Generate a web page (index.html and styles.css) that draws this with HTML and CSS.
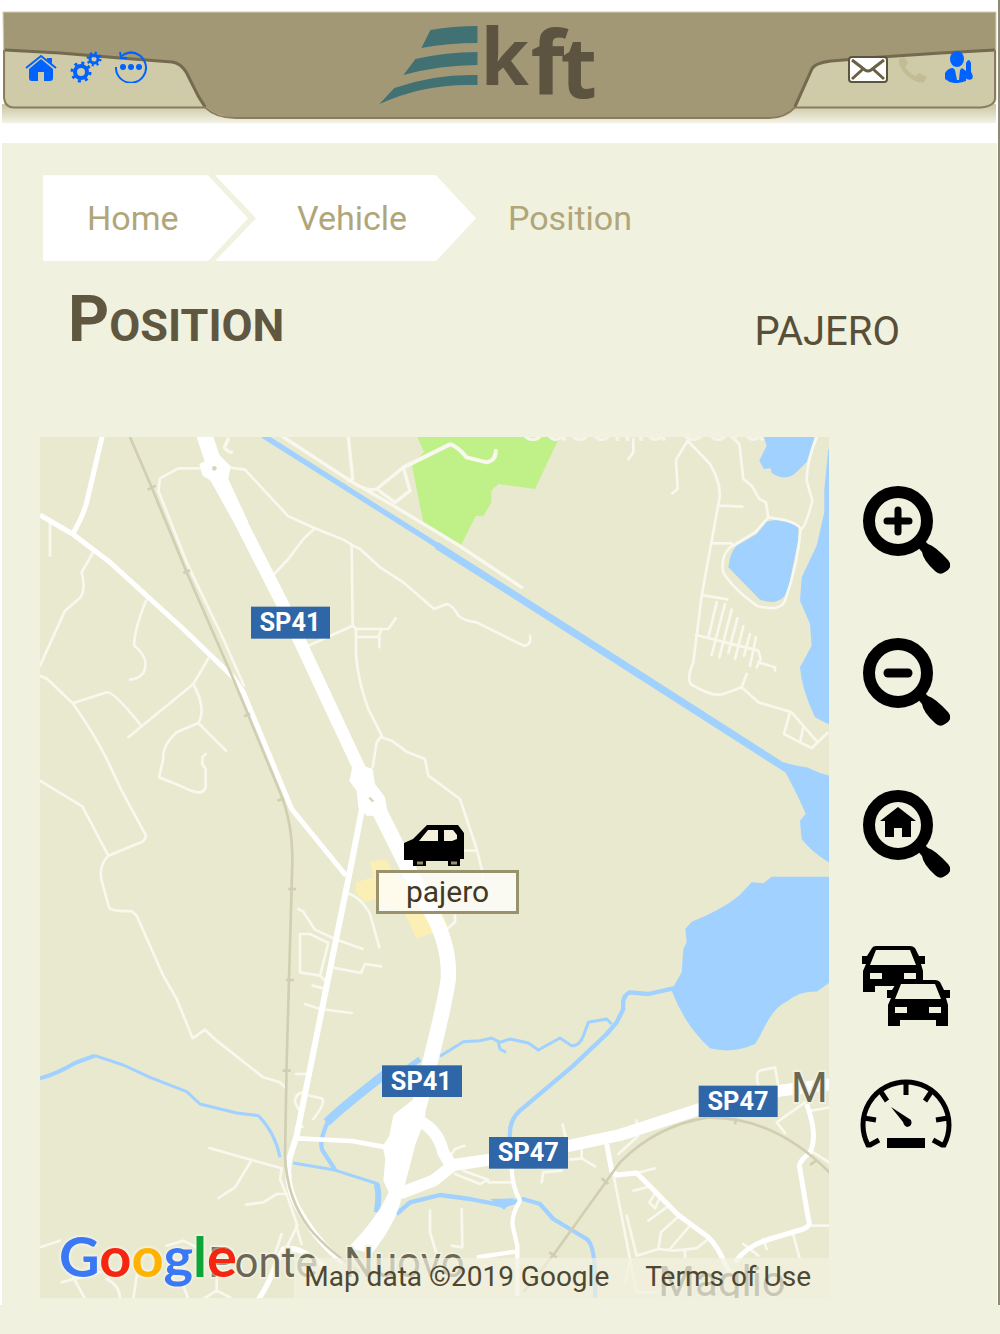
FILE: index.html
```
<!DOCTYPE html>
<html lang="en">
<head>
    <meta charset="UTF-8">
    <meta name="viewport" content="width=device-width, initial-scale=1.0">
    <title>kft - Position</title>
    <link rel="stylesheet" href="styles.css">
</head>
<body>
    <div class="page">
        <header class="header">
            <svg class="header-bg" viewBox="0 0 997 143" role="img" aria-label="kft">
                <defs>
                    <linearGradient id="shade" x1="0" y1="0" x2="0" y2="1">
                        <stop offset="0" stop-color="#c9c4a0"/>
                        <stop offset="1" stop-color="#f3f3e6"/>
                    </linearGradient>
                </defs>
                <rect x="2" y="104" width="993" height="19" fill="url(#shade)"/>
                <path d="M3 12H995V98Q995 106 983 107H794Q786 118 768 118H236Q216 117 205 107H14Q4 106 4 98Z" fill="#a29876" stroke="#d4d0b0"/>
                <path d="M5 50L60 53L120 58L172 62Q180 63 186 72L198 96L204 107H14Q5 106 5 99Z" fill="#cfcaa7"/>
                <path d="M994 50L940 53L880 57L830 61Q814 63 811 69L795 107H982Q994 105 994 98Z" fill="#cfcaa7"/>
                <path d="M5 50L60 53L120 58L172 62Q180 63 186 72L198 96L205 107M994 50L940 53L880 57L830 61Q814 63 811 69L794 107" fill="none" stroke="#736a50" stroke-width="3"/>
                <path d="M4 50V98Q5 107 14 107.500H205Q216 118 236 118H768Q784 118 794 107.500H980Q994 106 994 98V50" fill="none" stroke="#8c7c5e" stroke-width="2"/>
                <g fill="#427174">
                    <path d="M430 30Q453 26 477 26V43Q448 43 421 48Z"/>
                    <path d="M415 59Q446 52 477 52V65Q440 65 403 75Z"/>
                    <path d="M394 88Q433 74 477 75V85Q424 83 379 104Z"/>
                </g>
                <text class="logo-text" y="85"><tspan x="480" font-size="78">k</tspan><tspan x="530" y="94" font-size="88">f</tspan><tspan x="560" y="98" font-size="84">t</tspan></text>
            </svg>
            <nav class="top-nav" aria-label="Main">
                <a href="#" aria-label="Home">
                    <svg width="32" height="32" viewBox="0 0 32 32"><path d="M1 17L16 5L31 17" fill="none" stroke="#0062ff" stroke-width="2"/><path d="M4 18L16 8L28 18V27Q28 30 25 30H19V21H13V30H7Q4 30 4 27ZM22 7H27V13L22 9Z" fill="#0062ff"/></svg>
                </a>
                <a href="#" aria-label="Settings">
                    <svg width="32" height="32" viewBox="0 0 32 32" fill="none" stroke="#0062ff"><circle cx="11" cy="21" r="6" stroke-width="4"/><circle cx="11" cy="21" r="9" stroke-width="3" stroke-dasharray="3 4.070"/><circle cx="24" cy="8" r="4" stroke-width="3"/><circle cx="24" cy="8" r="6" stroke-width="3" stroke-dasharray="2 2.710"/></svg>
                </a>
                <a href="#" aria-label="History">
                    <svg width="32" height="32" viewBox="0 0 32 32" fill="none" stroke="#0062ff" stroke-width="2"><path d="M1 16A15 15 0 1 0 10 3Q17 -1 24 4M5 1L6 7L12 7M7 5L11 2"/><g fill="#0062ff" stroke="none"><circle cx="8" cy="16" r="3"/><circle cx="16" cy="16" r="3"/><circle cx="24" cy="16" r="3"/></g></svg>
                </a>
            </nav>
            <nav class="top-nav top-nav-right" aria-label="Contact">
                <a href="#" aria-label="Messages">
                    <svg width="42" height="32" viewBox="0 0 42 32"><rect x="2" y="6" width="38" height="25" rx="3" fill="#fff" stroke="#5d543c" stroke-width="2"/><path d="M5 9L18 19Q21 21 24 19L37 9M5 28L16 18M37 28L26 18" fill="none" stroke="#6a6144" stroke-width="3"/></svg>
                </a>
                <a href="#" aria-label="Call">
                    <svg width="36" height="32" viewBox="0 0 36 32"><path d="M2 8L7 6L11 12L8 16Q12 22 18 25L22 22L30 26L27 31Q22 33 13 27Q1 18 2 8Z" fill="#c3bb93"/></svg>
                </a>
                <a href="#" aria-label="Account">
                    <svg width="32" height="32" viewBox="0 0 32 32"><ellipse cx="16" cy="8" rx="7" ry="8" fill="#0062ff"/><path d="M4 22Q7 17 12 17L15 20H18L21 17L25 20V30Q12 35 4 28Z" fill="#0062ff"/><path d="M14 19H19L18 29H16Z" fill="#cfcaa7"/><path d="M25 12Q28 6 30 12V21Q33 25 31 28Q28 30 24 27Q23 24 25 22Z" fill="#0062ff"/></svg>
                </a>
            </nav>
        </header>

        <main class="content">
            <nav class="breadcrumb" aria-label="Breadcrumb">
                <a class="crumb crumb-first" href="#">Home</a>
                <a class="crumb crumb-next" href="#">Vehicle</a>
                <span class="crumb-current">Position</span>
            </nav>

            <div class="title-row">
                <h1>Position</h1>
                <p class="vehicle-name">PAJERO</p>
            </div>

            <div class="map-row">
                <div class="map">
                    <svg class="map-canvas" viewBox="0 24 2367 2583" preserveAspectRatio="xMidYMid slice" role="img" aria-label="Map">
                        <!-- green and built-up areas -->
                        <path d="M1122 0L1152 70L1115 105L1150 280L1262 350L1308 260L1330 262L1354 220V185L1375 165L1485 180L1570 0Z" fill="#bff188"/>
                        <path d="M990 1298L1040 1290L1060 1340L1180 1400L1225 1490L1205 1510L1165 1515L1130 1530L1095 1455L1000 1410L975 1420L948 1390V1360L1000 1345Z" fill="#fbefb5"/>

                        <!-- lakes -->
                        <g fill="#a0d1ff">
                            <path transform="translate(1170 0)" d="M1000 20L1010 50L988 95L1002 120L1022 118L1025 132Q1060 155 1090 138L1130 100L1155 20ZM1195 60L1183 180V250L1160 350L1115 445L1110 515L1140 585L1145 650L1110 715Q1115 780 1155 865L1200 888V60ZM1010 278Q1060 262 1105 295V330L1075 480Q1055 535 990 512L895 415Q900 370 920 350L980 315ZM1060 1000L1100 1010L1130 1015L1170 1032L1200 1040V1302Q1145 1270 1115 1230L1110 1175L1127 1155Q1110 1110 1062 1022Z"/>
                            <path transform="translate(1170 1290)" d="M1200 53H1025L1000 73L965 70L930 107Q880 150 785 188L766 210L770 250L760 270L755 340L732 380L725 395Q765 500 840 568Q910 585 975 555C1000 520 1020 450 1070 428Q1110 395 1160 398L1200 370Z"/>
                        </g>

                        <!-- canals and rivers -->
                        <g class="river">
                            <path d="M670 20L1200 355" stroke-width="16"/>
                            <path d="M1190 349L1600 610L2240 1020" stroke-width="22"/>
                            <g transform="translate(0 1290)">
                                <path d="M0 658Q50 645 105 612L165 590" stroke-width="12"/>
                                <path d="M165 590L250 618L330 655L440 698L480 735L590 762L655 770Q705 820 720 895" stroke-width="9"/>
                                <path d="M760 912L880 932L1015 975" stroke-width="9"/>
                                <path d="M1140 600L1070 650" stroke-width="16"/>
                                <path d="M1035 645Q900 750 860 790" stroke-width="26"/>
                                <path d="M865 785Q835 850 848 875L885 932" stroke-width="13"/>
                                <path d="M1010 975Q1020 1010 1010 1060" stroke-width="18"/>
                                <path d="M1070 1065L1110 1030L1200 1008L1290 1020L1390 1040L1450 1020L1500 1035L1540 1080L1640 1140Q1670 1160 1665 1320" stroke-width="13"/>
                            </g>
                            <g transform="translate(1170 1290)">
                                <path d="M30 592L100 548L150 545L185 537L210 550L240 540L295 552L325 573L390 537L425 560Q450 560 460 530L475 490L530 480L545 495M205 550L210 570L228 580" stroke-width="9"/>
                                <path d="M730 388L655 405L600 400Q575 410 580 450L560 490L530 525L430 620L270 755Q235 785 240 840" stroke-width="13"/>
                                <path d="M180 1020L255 1018L222 1052Z" fill="#a0d1ff" stroke="none"/>
                            </g>
                        </g>

                        <!-- small streets -->
                        <g class="street">
                            <path d="M480 118H415L360 148L355 185L440 400L550 630L612 770M565 115L615 122L745 262L825 298L910 332L940 350L960 360L1020 415L1090 460L1182 540L1220 525Q1240 530 1255 560Q1270 575 1310 580L1450 650Q1475 650 1470 620M825 298L790 330L745 390L700 438M935 350L938 590L805 650M938 590L948 600H1045L1067 568M948 624H1015L1025 600M1018 624V655M948 600V680Q955 760 985 840L1025 920L1010 940L998 1015M1025 925L1055 935L1100 968L1155 990L1165 1040L1260 1110L1310 1260L1330 1340M1270 1265H1310"/>
                            <path d="M30 285V380M158 372L125 430Q138 480 122 505L75 545L0 710M318 515Q280 610 283 650Q320 680 316 710Q315 745 270 752M505 688L460 765L305 892L265 925M460 765Q500 840 475 882L410 910Q365 950 370 990L357 1045L420 1070Q495 1110 497 1070V1020L487 1005V985L497 975M475 882L558 965M0 740L22 750L98 823L200 790Q220 785 305 892M98 823Q160 910 200 990L245 1085L318 1220Q315 1240 290 1245L205 1280L127 1132L0 1055M205 1280Q175 1310 185 1355L208 1438Q220 1448 275 1446L290 1460L370 1640L410 1710L458 1828L495 1802L530 1835L670 1945L720 1960L735 1975"/>
                            <path d="M565 30L553 55Q560 68 575 70M925 24L938 150L925 155M730 24L930 155Q980 190 1010 180L1090 115L1110 185L1065 220L1010 180M930 155L1060 230L1250 345L1445 475" stroke-width="10"/>
                            <path d="M1090 115L1230 46Q1250 50 1280 85L1340 100Q1368 95 1367 65" stroke-width="12"/>
                            <g transform="translate(1170 0)">
                                <path d="M610 30V70L595 90M773 35L738 92L743 180L727 193M773 35L840 105Q875 165 868 210L815 500L790 700Q765 760 790 770Q850 805 880 795L935 775L950 735M935 775L985 820L1085 850L1163 940L1192 912M1080 850L1062 915L1110 940L1145 957L1163 940M1120 895L1110 940M868 230L937 233M845 343H905M815 498L892 511M798 618L985 665L992 690L980 715M985 700L1035 715V725M860 520L835 625M885 525L845 678M905 542L868 685M922 568L895 672M940 592L915 690M960 615L942 680M978 625L960 710M905 24L928 45L940 150L965 170L988 210L1008 220L1015 265L975 310L900 355Q870 385 880 430Q905 475 980 530Q1050 550 1065 515Q1105 400 1112 300Q1100 275 1015 265M1112 300Q1125 300 1147 215L1130 155Q1130 100 1160 24"/>
                            </g>
                            <g transform="translate(0 1290)">
                                <path d="M775 150L790 158L825 212L885 240L968 270M780 225H810L865 252L840 350L780 340ZM840 350L855 365M875 325L963 342L975 315L1023 322M920 103Q960 110 990 165L1018 265M818 380L850 388M795 435L840 450L935 462M768 645H800M795 700Q765 700 765 730L775 750M800 708L845 718Q860 730 820 780M770 803H788M508 867L635 903L725 928L720 960L745 1020L772 1100L740 1165M635 903L585 985L535 1017M742 1005H710L670 1030L618 1037M768 1100L785 1155M725 1125L700 1200M0 1165L60 1145M100 1255L135 1320M65 1270L180 1240M200 1260Q240 1280 240 1320M290 1250L280 1320M430 1280L445 1320M530 1260V1295L490 1320M530 1295L570 1315M380 1160L430 1145L480 1170M1170 1055V1120L1210 1250"/>
                            </g>
                            <g transform="translate(1170 1290)">
                                <path d="M75 170V190L45 215M55 900L75 870L103 860M75 945L150 975L175 962L100 935M175 970H245M398 797L410 845M420 902L455 898L495 922M455 870V898M335 970L340 940L395 935M620 785L625 830L565 885M675 928L610 945M550 945L600 1200L585 1275M590 1070L620 1190L685 1170L730 1175L800 1168L835 1140M685 1170L693 1120L748 1070M720 1170L780 1100M655 1085L710 1045M610 995L650 985M675 1005L658 1030L675 1048L692 1010M765 1175V1195M940 1155L985 1190M1000 1140L1010 1170M1088 1120L1108 1195M1135 1100H1200M1150 880L1200 912M985 680Q975 640 990 635L1035 625L1045 680M1125 730L1040 790L1065 822M1145 755L1200 745M95 1050L97 1165L65 1160M600 1200L620 1300H680"/>
                            </g>
                        </g>

                        <!-- roads -->
                        <g class="road">
                            <path d="M187 20L140 220Q130 260 98 315M0 258L98 315L210 400L430 600L580 745L610 790L755 1140L918 1340" stroke-width="15"/>
                            <path d="M968 1130L935 1300L850 1720L770 2120L748 2190Q735 2260 770 2330Q830 2440 910 2500" stroke-width="18"/>
                            <path d="M487 0L525 115" stroke-width="48"/>
                            <path d="M478 105L535 75L572 112L565 150L625 280L580 270L520 160L488 140Z" fill="#fff" stroke="none"/>
                            <path d="M525 140L600 275L725 520L968 1040L1000 1110" stroke-width="38"/>
                            <path d="M940 1000L998 1020L1005 1065L1035 1105L1045 1160L980 1160L955 1135L950 1085L928 1055Z" fill="#fff" stroke="none"/>
                            <path d="M1005 1120L1110 1330L1175 1450Q1230 1550 1225 1650Q1215 1720 1175 1880L1135 2040" stroke-width="46"/>
                            <g transform="translate(0 1290)">
                                <path d="M770 838L935 846L1040 865" stroke-width="14"/>
                                <path d="M1160 690L1060 768L1048 830L1028 862L1036 900L1030 965L1046 1000Q1010 1080 925 1165L995 1185Q1070 1090 1085 1015L1125 860L1155 780Z" fill="#fff" stroke="none"/>
                                <path d="M1120 780Q1190 800 1210 880L1230 915M1080 1003L1180 965L1240 918L1350 902L1590 860L1740 828L1980 750L2220 695L2380 675" stroke-width="36"/>
                                <path d="M650 1330Q690 1270 705 1220L730 1170Q780 1160 850 1220" stroke-width="16"/>
                            </g>
                            <g transform="translate(1170 1290)">
                                <path d="M245 925Q245 980 270 1025Q240 1075 250 1110L262 1160V1310M140 1195L255 1178" stroke-width="13"/>
                                <path d="M530 855L545 935L560 948L620 942L745 1068L835 1135Q865 1165 885 1215L900 1240M915 1210Q950 1160 1020 1140L1120 1110Q1145 1100 1135 1080L1108 920Q1110 905 1140 880Q1165 830 1130 735" stroke-width="15"/>
                            </g>
                            <circle cx="523" cy="118" r="7" fill="#d8d6b4" stroke="none"/>
                            <path d="M988 1106L1000 1118" stroke="#d8d6b4" stroke-width="7"/>
                        </g>

                        <!-- railways -->
                        <g class="rail">
                            <path d="M270 24L335 175L440 430L580 750L720 1090Q758 1180 757 1300L740 1900L735 2180Q740 2310 810 2400Q860 2460 960 2530"/>
                            <path d="M1450 2590L1540 2478L1740 2200Q1850 2090 2000 2066Q2200 2060 2370 2232"/>
                            <path d="M323 182L347 170M430 432L450 424M612 862L630 854M712 1115L732 1108M745 1380H768M738 1653H762M728 1925H752M2086 2066V2086M1685 2248L1705 2265M1528 2470L1550 2485M2310 2208L2328 2195"/>
                        </g>

                        <!-- road numbers -->
                        <g class="shield">
                            <rect x="633" y="533" width="237" height="96"/><text x="750" y="607">SP41</text>
                            <rect x="1026" y="1909" width="240" height="95"/><text x="1144" y="1982">SP41</text>
                            <rect x="1347" y="2124" width="237" height="95"/><text x="1465" y="2197">SP47</text>
                            <rect x="1976" y="1970" width="237" height="94"/><text x="2094" y="2043">SP47</text>
                        </g>

                        <!-- place names -->
                        <g class="place">
                            <text x="505" y="2544">Ponte</text>
                            <text x="912" y="2544">Nuovo</text>
                            <text x="2253" y="2020">M</text>
                            <text x="1855" y="2602">Maglio</text>
                            <text class="place-light" x="1435" y="36">Cascina Cora</text>
                        </g>
                    </svg>

                    <div class="marker">
                        <svg width="62" height="44" viewBox="0 0 62 44" role="img" aria-label="Car"><path d="M1 19L10 15L24 1H55L61 9V35H57V42H45V37H23V42H10V36H1Z"/><path d="M16 17L25 6H35V17ZM41 6H50L54 11V15L49 17H41Z" fill="#f3f1dd"/><path d="M14 39H20M48 39H54" stroke="#9a916b" stroke-width="3"/></svg>
                        <span class="marker-label">pajero</span>
                    </div>

                    <a class="google" href="#" aria-label="Google"><span class="g-blue">G</span><span class="g-red">o</span><span class="g-yellow">o</span><span class="g-blue">g</span><span class="g-green">l</span><span class="g-red">e</span></a>
                    <div class="attribution">
                        <span>Map data ©2019 Google</span>
                        <a href="#">Terms of Use</a>
                    </div>
                </div>

                <div class="tools">
                    <button type="button" aria-label="Zoom in">
                        <svg width="88" height="88" viewBox="0 0 88 88"><circle cx="36" cy="35" r="29" fill="none" stroke="#000" stroke-width="12"/><path d="M53 58L60 52L66 58Q73 60 86 74Q92 81 83 86Q78 90 73 85Q61 74 60 66Z"/><path d="M36 24V46M25 35H47" stroke="#000" stroke-width="7" stroke-linecap="round"/></svg>
                    </button>
                    <button type="button" aria-label="Zoom out">
                        <svg width="88" height="88" viewBox="0 0 88 88"><circle cx="36" cy="35" r="29" fill="none" stroke="#000" stroke-width="12"/><path d="M53 58L60 52L66 58Q73 60 86 74Q92 81 83 86Q78 90 73 85Q61 74 60 66Z"/><path d="M26 35H46" stroke="#000" stroke-width="9" stroke-linecap="round"/></svg>
                    </button>
                    <button type="button" aria-label="Zoom home">
                        <svg width="88" height="88" viewBox="0 0 88 88"><circle cx="36" cy="35" r="29" fill="none" stroke="#000" stroke-width="12"/><path d="M53 58L60 52L66 58Q73 60 86 74Q92 81 83 86Q78 90 73 85Q61 74 60 66Z"/><path d="M36 17L54 31H49V47H40V38H32V47H23V31H18Z"/></svg>
                    </button>
                    <button type="button" aria-label="All vehicles">
                        <svg width="88" height="88" viewBox="0 0 88 88">
                            <g id="car"><path d="M0 14H5L10 6Q11 4 14 4H48Q51 4 53 6L57 14H63V22H59L61 29V50H49V44H13V50H1V29L4 22H0Z"/><path d="M14 8H48L54 23H8Z" fill="#f1f1e0"/><path d="M8 31H20V37H8ZM42 31H54V37H42Z" fill="#f1f1e0"/></g>
                            <path d="M32 44H36V48H32Z" fill="#f1f1e0"/>
                            <use href="#car" x="25" y="34"/>
                        </svg>
                    </button>
                    <button class="tool-gauge" type="button" aria-label="Mileage">
                        <svg width="92" height="70" viewBox="0 0 92 70"><path d="M19 62L10 67H8A43 43 0 1 1 84 67H82L73 62" fill="none" stroke="#000" stroke-width="5"/><path d="M46 3V17M19 11L27 23M73 11L65 23M4 40L16 42M88 40L76 42" fill="none" stroke="#000" stroke-width="5"/><path d="M31 29L51 42Q53 48 47 49Q44 48 43 44ZM27 60H65V70H27Z"/></svg>
                    </button>
                </div>
            </div>
        </main>
    </div>
</body>
</html>
```

FILE: styles.css
```
* { margin: 0; padding: 0; box-sizing: border-box; }
body { background: #f1f1e0; min-height: 100vh; color: #574f38; font-family: Roboto, 'Liberation Sans', sans-serif; }
a { color: inherit; text-decoration: none; }
svg { display: block; }
.page { background: #f1f1e0; border-left: 2px solid #fff; border-right: 2px solid #8f8a78; box-shadow: inset -1px 0 0 #fff; }

.header { display: grid; background: #fff; margin-left: -2px; }
.header-bg { grid-area: 1 / 1; width: 100%; height: auto; }
.logo-text { font-family: 'Open Sans', sans-serif; font-weight: 700; fill: #5c5440; }
.top-nav { grid-area: 1 / 1; justify-self: start; align-self: start; display: flex; gap: 13px; padding: 51px 0 0 25px; }
.top-nav-right { justify-self: end; gap: 8px; padding: 51px 25px 0 0; }

.content { padding: 32px 0 7px 38px; }
.breadcrumb { display: flex; padding-left: 3px; font-size: 34px; line-height: 86px; color: #b0a67a; }
.crumb { background: #fff; }
.crumb-first { width: 205px; padding-left: 44px; clip-path: polygon(0 0, calc(100% - 40px) 0, 100% 50%, calc(100% - 40px) 100%, 0 100%); }
.crumb-next { width: 261px; margin-left: -33px; padding-left: 82px; clip-path: polygon(0 0, calc(100% - 40px) 0, 100% 50%, calc(100% - 40px) 100%, 0 100%, 41px 50%); }
.crumb-current { padding-left: 32px; }

.title-row { display: flex; justify-content: space-between; align-items: flex-end; padding: 23px 98px 81px 28px; }
h1 { font-size: 45px; line-height: 60px; font-weight: 700; text-transform: uppercase; color: #5f5740; }
h1::first-letter { font-size: 64px; line-height: 72px; }
.vehicle-name { font-size: 40px; line-height: 48px; }

.map-row { display: flex; align-items: flex-start; }
.map { position: relative; flex: 1; aspect-ratio: 789 / 861; background: #e9e9cf; overflow: hidden; }
.map-canvas { width: 100%; height: 100%; }
.river { fill: none; stroke: #a0d1ff; stroke-linejoin: round; }
.street { fill: none; stroke: #f8f8ee; stroke-width: 8; stroke-linejoin: round; stroke-linecap: round; }
.road { fill: none; stroke: #fff; stroke-linejoin: round; }
.rail { fill: none; stroke: #d0ceb3; stroke-width: 8; }
.shield rect { fill: #2f66a8; }
.shield text { fill: #fff; font-size: 76px; font-weight: 700; text-anchor: middle; }
.place { fill: #6b6754; font-size: 126px; stroke: #f1f1e0; stroke-width: 10; paint-order: stroke; }
.place-light { fill: #f4f4e8; stroke: none; }

.marker { position: absolute; left: 336px; top: 387px; display: flex; flex-direction: column; align-items: center; width: 143px; }
.marker svg { margin-right: 28px; }
.marker-label { width: 100%; margin-top: 2px; border: 3px solid #9a916d; background: rgba(255, 255, 255, 0.75); font-size: 30px; line-height: 38px; text-align: center; color: #3f3925; }
.google { position: absolute; left: 19px; bottom: 7px; font-family: Lato, sans-serif; font-weight: 700; font-size: 56px; line-height: 70px; text-shadow: 0 0 4px #fff; }
.g-blue { color: #3b78f5; }
.g-red { color: #f5250f; }
.g-yellow { color: #ffb300; }
.g-green { color: #0ca536; }
.attribution { position: absolute; right: 0; bottom: 0; display: flex; gap: 36px; padding: 0 18px 2px 10px; background: rgba(241, 241, 224, 0.7); font-size: 28px; line-height: 38px; color: #4e4731; white-space: nowrap; }

.tools { display: flex; flex-direction: column; align-items: center; gap: 64px; width: 169px; padding: 49px 15px 0 0; }
.tools button { border: none; background: none; cursor: pointer; }
.tools .tool-gauge { margin-top: -16px; }
```
